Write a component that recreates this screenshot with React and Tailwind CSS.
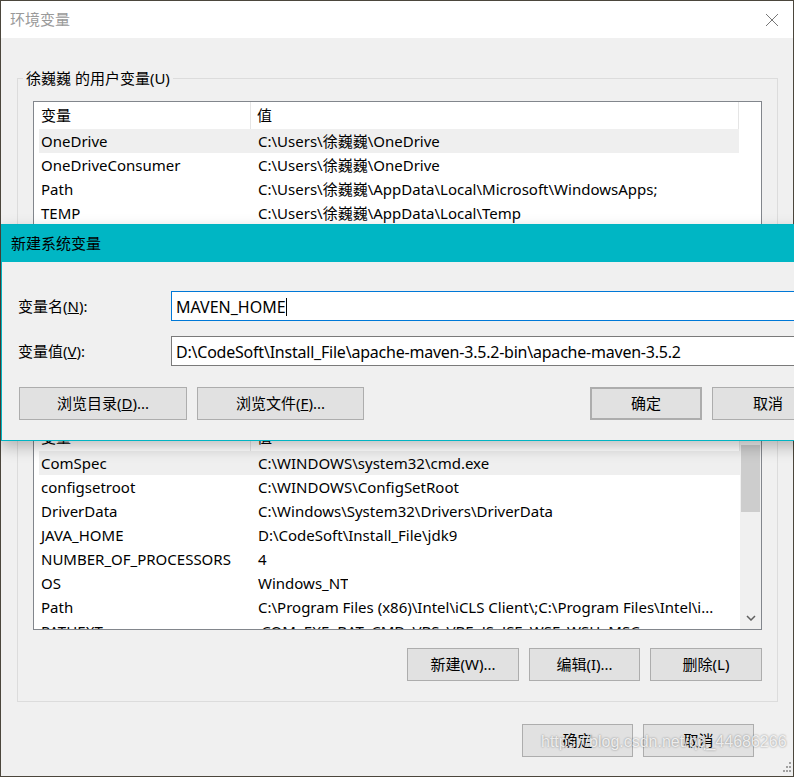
const userVars = [
  ['OneDrive', 'C:\\Users\\徐巍巍\\OneDrive'],
  ['OneDriveConsumer', 'C:\\Users\\徐巍巍\\OneDrive'],
  ['Path', 'C:\\Users\\徐巍巍\\AppData\\Local\\Microsoft\\WindowsApps;'],
  ['TEMP', 'C:\\Users\\徐巍巍\\AppData\\Local\\Temp'],
]

const systemVars = [
  ['ComSpec', 'C:\\WINDOWS\\system32\\cmd.exe'],
  ['configsetroot', 'C:\\WINDOWS\\ConfigSetRoot'],
  ['DriverData', 'C:\\Windows\\System32\\Drivers\\DriverData'],
  ['JAVA_HOME', 'D:\\CodeSoft\\Install_File\\jdk9'],
  ['NUMBER_OF_PROCESSORS', '4'],
  ['OS', 'Windows_NT'],
  ['Path', 'C:\\Program Files (x86)\\Intel\\iCLS Client\\;C:\\Program Files\\Intel\\i...'],
  ['PATHEXT', '.COM;.EXE;.BAT;.CMD;.VBS;.VBE;.JS;.JSE;.WSF;.WSH;.MSC'],
]

function WinButton({ children, className = '' }) {
  return (
    <button className={`h-[33px] bg-[#e1e1e1] border border-[#adadad] text-[15px] text-black flex items-center justify-center ${className}`}>
      {children}
    </button>
  )
}

function VarList({ rows, height, scrollbar }) {
  return (
    <div className={`border border-[#82868c] bg-white flex overflow-hidden ${height}`}>
      <div className="flex-1 flex flex-col min-w-0">
        <div className="h-[27px] flex shrink-0 border-r border-[#e5e5e5] text-[15px] text-black">
          <div className="w-[217px] pl-[7px] flex items-center border-r border-[#e5e5e5]">变量</div>
          <div className="pl-[6px] flex items-center">值</div>
        </div>
        {rows.map(([name, value], i) => (
          <div
            key={name + i}
            className={`h-[24px] shrink-0 ml-[5px] flex items-center text-[15px] text-black whitespace-nowrap ${i === 0 ? 'bg-[#efefef]' : ''}`}
          >
            <div className="w-[213px] pl-[2px] shrink-0">{name}</div>
            <div className="pl-[6px] truncate">{value}</div>
          </div>
        ))}
      </div>
      {scrollbar ? (
        <div className="w-[21px] bg-[#f0f0f0] flex flex-col items-center pt-[21px] pb-[8px] justify-between">
          <div className="w-[19px] h-[67px] bg-[#cdcdcd]" />
          <svg width="10" height="6" viewBox="0 0 10 6">
            <path d="M1 1 L5 5 L9 1" fill="none" stroke="#606060" strokeWidth="1.5" />
          </svg>
        </div>
      ) : (
        <div className="w-[22px] bg-white" />
      )}
    </div>
  )
}

export default function App() {
  return (
    <div className="w-[794px] h-[777px] overflow-hidden relative bg-[#4b463c] font-['Noto_Sans','Noto_Sans_CJK_SC',sans-serif]">
      {/* main window */}
      <div className="ml-px mt-px w-[792px] h-[775px] bg-[#f0f0f0] flex flex-col">
        <div className="h-[37px] bg-white flex items-center justify-between pl-[9px] pr-[14px] shrink-0">
          <span className="text-[15px] text-[#9a9a9a]">环境变量</span>
          <svg width="14" height="14" viewBox="0 0 14 14">
            <path d="M1 1 L13 13 M13 1 L1 13" stroke="#777" strokeWidth="1" />
          </svg>
        </div>

        <div className="pl-[16px] pr-[15px] flex flex-col">
          <fieldset className="mt-[30px] border border-[#dcdcdc] px-[5px] pb-[12px]">
            <legend className="px-[3px] leading-[20px] text-[15px] text-black">徐巍巍 的用户变量(U)</legend>
            <div className="mx-[10px] mt-[13px] flex flex-col">
              <VarList rows={userVars} height="h-[228px]" />
              <div className="mt-[19px] flex justify-end gap-[10px]">
                <WinButton className="w-[112px]">新建(N)...</WinButton>
                <WinButton className="w-[112px]">编辑(E)...</WinButton>
                <WinButton className="w-[112px]">删除(D)</WinButton>
              </div>
            </div>
          </fieldset>

          <fieldset className="mt-[5px] border border-[#dcdcdc] px-[5px] pb-[20px]">
            <legend className="px-[3px] leading-[20px] text-[15px] text-black">系统变量(S)</legend>
            <div className="mx-[10px] mt-[4px] flex flex-col">
              <VarList rows={systemVars} height="h-[207px]" scrollbar />
              <div className="mt-[18px] flex justify-end gap-[10px]">
                <WinButton className="w-[112px]">新建(W)...</WinButton>
                <WinButton className="w-[111px]">编辑(I)...</WinButton>
                <WinButton className="w-[112px]">删除(L)</WinButton>
              </div>
            </div>
          </fieldset>

          <div className="mt-[22px] pr-[24px] flex justify-end gap-[10px]">
            <WinButton className="w-[111px]">确定</WinButton>
            <WinButton className="w-[111px]">取消</WinButton>
          </div>
        </div>
      </div>

      {/* new system variable dialog */}
      <div className="absolute left-[1px] top-[224px] w-[900px] h-[217px] border border-[#00b4c3] bg-[#f0f0f0] flex flex-col shadow-[0_6px_14px_rgba(0,0,0,0.25)]">
        <div className="h-[37px] bg-[#00b6c4] flex items-center pl-[9px] shrink-0">
          <span className="text-[15px] text-black">新建系统变量</span>
        </div>
        <div className="pl-[16px] flex flex-col">
          <div className="mt-[29px] flex items-center">
            <span className="w-[153px] text-[15px] text-black">变量名(<span className="underline">N</span>):</span>
            <div className="flex-1 h-[30px] bg-white border border-[#0078d7] pl-[4px] pt-px flex items-center text-[16px] text-black">
              MAVEN_HOME<span className="w-px h-[18px] bg-black" />
            </div>
          </div>
          <div className="mt-[15px] flex items-center">
            <span className="w-[153px] text-[15px] text-black">变量值(<span className="underline">V</span>):</span>
            <div className="flex-1 h-[30px] bg-white border border-[#7a7a7a] pl-[4px] pt-px flex items-center text-[16px] tracking-[-0.22px] text-black">
              D:\CodeSoft\Install_File\apache-maven-3.5.2-bin\apache-maven-3.5.2
            </div>
          </div>
          <div className="mt-[21px] flex items-center">
            <WinButton className="ml-px w-[168px]">浏览目录(<span className="underline">D</span>)...</WinButton>
            <WinButton className="ml-[10px] w-[167px]">浏览文件(<span className="underline">F</span>)...</WinButton>
            <WinButton className="ml-[226px] w-[112px] border-2 border-[#0078d7]">确定</WinButton>
            <WinButton className="ml-[10px] w-[112px]">取消</WinButton>
          </div>
        </div>
      </div>

      {/* watermark */}
      <span className="absolute left-[541px] top-[730px] text-[16px] text-white/80 font-['Liberation_Sans',sans-serif] [text-shadow:0_0_2px_rgba(0,0,0,0.45)]">
        https://blog.csdn.net/qq_44686266
      </span>

      {/* resize grip */}
      <svg className="absolute left-[782px] top-[762px]" width="10" height="11" viewBox="0 0 10 11">
        <g fill="#a0a0a0">
          <rect x="7" y="0" width="2" height="2" />
          <rect x="4" y="4" width="2" height="2" />
          <rect x="7" y="4" width="2" height="2" />
          <rect x="1" y="8" width="2" height="2" />
          <rect x="4" y="8" width="2" height="2" />
          <rect x="7" y="8" width="2" height="2" />
        </g>
      </svg>
    </div>
  )
}
